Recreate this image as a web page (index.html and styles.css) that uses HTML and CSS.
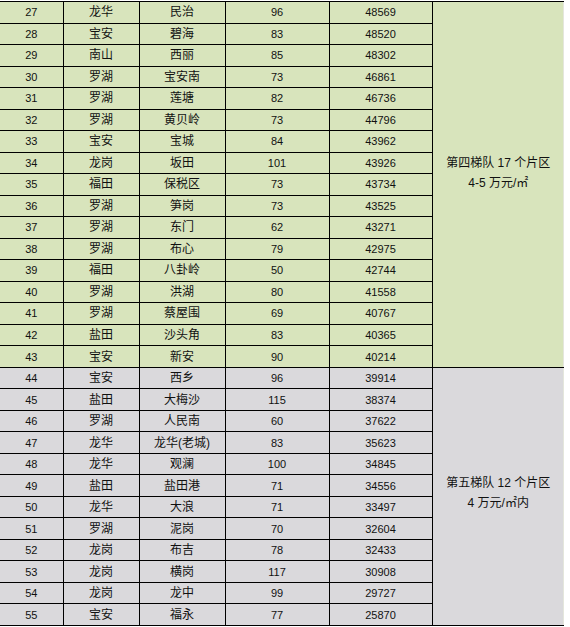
FILE: index.html
```html
<!DOCTYPE html>
<html lang="zh-CN">
<head>
<meta charset="utf-8">
<title>片区房价梯队</title>
<link rel="stylesheet" href="styles.css">
</head>
<body>
<table class="grid">
<colgroup>
<col class="c1"><col class="c2"><col class="c3"><col class="c4"><col class="c5"><col class="c6">
</colgroup>
<tbody>
<tr class="g"><td>27</td><td>龙华</td><td>民治</td><td>96</td><td>48569</td><td class="tier tier4" rowspan="17"><div class="tier-text">第四梯队 17 个片区<br>4-5 万元/㎡</div></td></tr>
<tr class="g"><td>28</td><td>宝安</td><td>碧海</td><td>83</td><td>48520</td></tr>
<tr class="g"><td>29</td><td>南山</td><td>西丽</td><td>85</td><td>48302</td></tr>
<tr class="g"><td>30</td><td>罗湖</td><td>宝安南</td><td>73</td><td>46861</td></tr>
<tr class="g"><td>31</td><td>罗湖</td><td>莲塘</td><td>82</td><td>46736</td></tr>
<tr class="g"><td>32</td><td>罗湖</td><td>黄贝岭</td><td>73</td><td>44796</td></tr>
<tr class="g"><td>33</td><td>宝安</td><td>宝城</td><td>84</td><td>43962</td></tr>
<tr class="g"><td>34</td><td>龙岗</td><td>坂田</td><td>101</td><td>43926</td></tr>
<tr class="g"><td>35</td><td>福田</td><td>保税区</td><td>73</td><td>43734</td></tr>
<tr class="g"><td>36</td><td>罗湖</td><td>笋岗</td><td>73</td><td>43525</td></tr>
<tr class="g"><td>37</td><td>罗湖</td><td>东门</td><td>62</td><td>43271</td></tr>
<tr class="g"><td>38</td><td>罗湖</td><td>布心</td><td>79</td><td>42975</td></tr>
<tr class="g"><td>39</td><td>福田</td><td>八卦岭</td><td>50</td><td>42744</td></tr>
<tr class="g"><td>40</td><td>罗湖</td><td>洪湖</td><td>80</td><td>41558</td></tr>
<tr class="g"><td>41</td><td>罗湖</td><td>蔡屋围</td><td>69</td><td>40767</td></tr>
<tr class="g"><td>42</td><td>盐田</td><td>沙头角</td><td>83</td><td>40365</td></tr>
<tr class="g"><td>43</td><td>宝安</td><td>新安</td><td>90</td><td>40214</td></tr>
<tr class="s"><td>44</td><td>宝安</td><td>西乡</td><td>96</td><td>39914</td><td class="tier tier5" rowspan="12"><div class="tier-text">第五梯队 12 个片区<br>4 万元/㎡内</div></td></tr>
<tr class="s"><td>45</td><td>盐田</td><td>大梅沙</td><td>115</td><td>38374</td></tr>
<tr class="s"><td>46</td><td>罗湖</td><td>人民南</td><td>60</td><td>37622</td></tr>
<tr class="s"><td>47</td><td>龙华</td><td>龙华(老城)</td><td>83</td><td>35623</td></tr>
<tr class="s"><td>48</td><td>龙华</td><td>观澜</td><td>100</td><td>34845</td></tr>
<tr class="s"><td>49</td><td>盐田</td><td>盐田港</td><td>71</td><td>34556</td></tr>
<tr class="s"><td>50</td><td>龙华</td><td>大浪</td><td>71</td><td>33497</td></tr>
<tr class="s"><td>51</td><td>罗湖</td><td>泥岗</td><td>70</td><td>32604</td></tr>
<tr class="s"><td>52</td><td>龙岗</td><td>布吉</td><td>78</td><td>32433</td></tr>
<tr class="s"><td>53</td><td>龙岗</td><td>横岗</td><td>117</td><td>30908</td></tr>
<tr class="s"><td>54</td><td>龙岗</td><td>龙中</td><td>99</td><td>29727</td></tr>
<tr class="s"><td>55</td><td>宝安</td><td>福永</td><td>77</td><td>25870</td></tr>
</tbody>
</table>
</body>
</html>
```

FILE: styles.css
```css
html, body {
  margin: 0;
  padding: 0;
  background: #ffffff;
}

body {
  padding-top: 1px;
  font-family: "Liberation Sans", "Noto Sans CJK SC", sans-serif;
  font-size: 11px;
  color: #111111;
}

.grid {
  border-collapse: collapse;
  table-layout: fixed;
  width: 564px;
}

.c1 { width: 63px; }
.c2 { width: 76px; }
.c3 { width: 86px; }
.c4 { width: 104px; }
.c5 { width: 103px; }
.c6 { width: 132px; }

.grid td {
  height: 20.53px;
  padding: 0;
  border: 1px solid #000000;
  text-align: center;
  vertical-align: middle;
  line-height: 14px;
  white-space: nowrap;
}

.grid td:nth-child(2),
.grid td:nth-child(3) {
  font-size: 12px;
}

.grid tr td:first-child {
  border-left: none;
}

.g td {
  background: #d8e4bc;
}

.s td {
  background: #dad9dc;
}

.grid td.tier {
  border-right: none;
  font-size: 12px;
  box-shadow: inset -1px 0 0 #e4e6dc;
}

.tier-text {
  line-height: 20px;
}

.tier4 .tier-text {
  padding-bottom: 22px;
}

.tier5 .tier-text {
  padding-bottom: 6px;
}
```
